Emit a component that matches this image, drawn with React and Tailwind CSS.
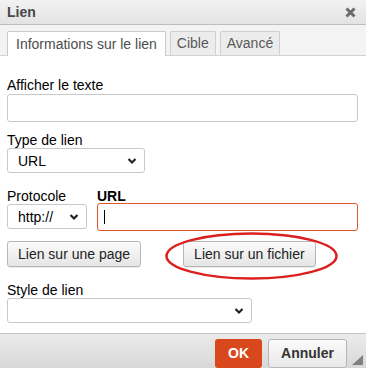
import React from "react";

const Chevron = () => (
  <svg
    className="pointer-events-none absolute right-[8px] top-1/2 -translate-y-1/2"
    width="10"
    height="7"
    viewBox="0 0 10 7"
  >
    <path d="M1.5 1.5 L5 5 L8.5 1.5" fill="none" stroke="#222" strokeWidth="2.2" />
  </svg>
);

const Select = ({ width, value }) => (
  <div className={`relative ${width}`}>
    <select
      defaultValue={value}
      className="h-[25px] w-full appearance-none rounded-[3px] border border-[#c9c9c9] bg-white pl-[10px] text-[14px] text-black outline-none"
    >
      <option>{value}</option>
    </select>
    <Chevron />
  </div>
);

const Button = ({ children }) => (
  <button className="h-[26px] rounded-[3px] border border-[#b6b6b6] bg-gradient-to-b from-[#fbfbfb] to-[#e5e5e5] px-[10px] text-[14px] text-[#222] shadow-[0_1px_0_rgba(0,0,0,0.08)]">
    {children}
  </button>
);

export default function App() {
  return (
    <div
      className="relative flex h-[368px] w-[366px] flex-col overflow-hidden bg-white"
      style={{ fontFamily: '"Liberation Sans", Arial, sans-serif' }}
    >
      {/* Title bar */}
      <div className="flex h-[25px] shrink-0 items-center justify-between border-b border-[#bdbdbd] bg-gradient-to-b from-[#f2f2f2] to-[#e3e3e3] pl-[7px] pr-[10px]">
        <span className="text-[14px] font-bold leading-none text-[#474747]">Lien</span>
        <svg width="11" height="11" viewBox="0 0 11 11">
          <path d="M1.5 1.5 L9.5 9.5 M9.5 1.5 L1.5 9.5" stroke="#6a6a6a" strokeWidth="3" />
        </svg>
      </div>

      {/* Tabs */}
      <div className="flex h-[31px] shrink-0 items-end gap-[4px] border-b border-[#d2d2d2] bg-[#f3f3f3] pl-[7px]">
        <div className="-mb-px flex h-[25px] items-center rounded-t-[2px] border border-b-0 border-[#c9c9c9] bg-white px-[8px] text-[14px] text-[#4c4c4c]">
          Informations sur le lien
        </div>
        <div className="flex h-[24px] items-center rounded-t-[2px] border border-b-0 border-[#cfcfcf] bg-[#ececec] px-[6px] text-[14px] text-[#595959]">
          Cible
        </div>
        <div className="flex h-[24px] items-center rounded-t-[2px] border border-b-0 border-[#cfcfcf] bg-[#ececec] px-[6px] text-[14px] text-[#595959]">
          Avancé
        </div>
      </div>

      {/* Body */}
      <div className="flex flex-1 flex-col px-[7px] pt-[21px] text-[14px] leading-[16px] text-black">
        <label>Afficher le texte</label>
        <input className="mt-[1px] h-[28px] w-[351px] rounded-[3px] border border-[#c9c9c9] outline-none" />

        <label className="mt-[10px]">Type de lien</label>
        <Select width="w-[138px]" value="URL" />

        <div className="mt-[15px] flex gap-[10px]">
          <div className="flex flex-col">
            <label>Protocole</label>
            <Select width="w-[80px]" value="http://" />
          </div>
          <div className="flex flex-col">
            <label className="font-bold">URL</label>
            <div className="relative -mt-[1px] h-[28px] w-[261px] rounded-[3px] border border-[#e0542a] bg-white">
              <span className="absolute left-[6px] top-[6px] h-[14px] w-px bg-black" />
            </div>
          </div>
        </div>

        <div className="mt-[10px] flex gap-[42px]">
          <Button>Lien sur une page</Button>
          <Button>Lien sur un fichier</Button>
        </div>

        <label className="mt-[15px]">Style de lien</label>
        <Select width="w-[245px]" value="" />
      </div>

      {/* Footer */}
      <div className="relative flex h-[35px] shrink-0 justify-end gap-[6px] border-t border-[#c4c4c4] bg-gradient-to-b from-[#ebebeb] to-[#d8d8d8] pr-[19px] pt-[5px]">
        <button className="h-[29px] w-[47px] rounded-[3px] bg-[#d9481c] text-[14px] font-bold text-white">OK</button>
        <button className="h-[29px] w-[79px] rounded-[3px] border border-[#b6b6b6] bg-gradient-to-b from-[#fbfbfb] to-[#e8e8e8] text-[14px] font-bold text-[#333]">
          Annuler
        </button>
        <svg className="absolute bottom-[3px] right-[3px]" width="11" height="10" viewBox="0 0 11 10">
          <path d="M11 0 L11 10 L0 10 Z" fill="#808080" />
        </svg>
      </div>

      {/* Red annotation ellipse */}
      <svg className="pointer-events-none absolute left-0 top-0" width="366" height="368">
        <ellipse cx="251.5" cy="256" rx="85" ry="22.5" fill="none" stroke="#dc1f1f" strokeWidth="2.5" />
      </svg>
    </div>
  );
}
